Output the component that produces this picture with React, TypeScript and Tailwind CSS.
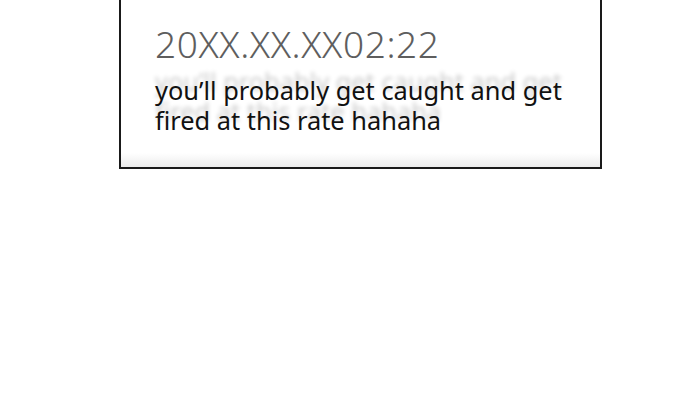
export default function App() {
  return (
    <div className="h-[401px] w-[690px] bg-white font-['Noto_Sans',sans-serif]">
      <div className="ml-[119px] w-[483px] border-x-2 border-b-2 border-[#1a1a1a] bg-white">
        <div className="pl-[34px] pt-[21px]">
          <p className="text-[37px] font-light leading-[46px] tracking-[0.6px] text-[#5e5e5e]">20XX.XX.XX02:22</p>
          <p className="mt-[8px] text-[25.4px] leading-[30px] text-[#111] [text-shadow:0_-9px_4px_rgba(0,0,0,0.2)]">
            you’ll probably get caught and get
            <br />
            fired at this rate hahaha
          </p>
        </div>
        <div className="mt-[18px] h-[14px] bg-gradient-to-b from-white to-[#ececec]" />
      </div>
    </div>
  );
}
